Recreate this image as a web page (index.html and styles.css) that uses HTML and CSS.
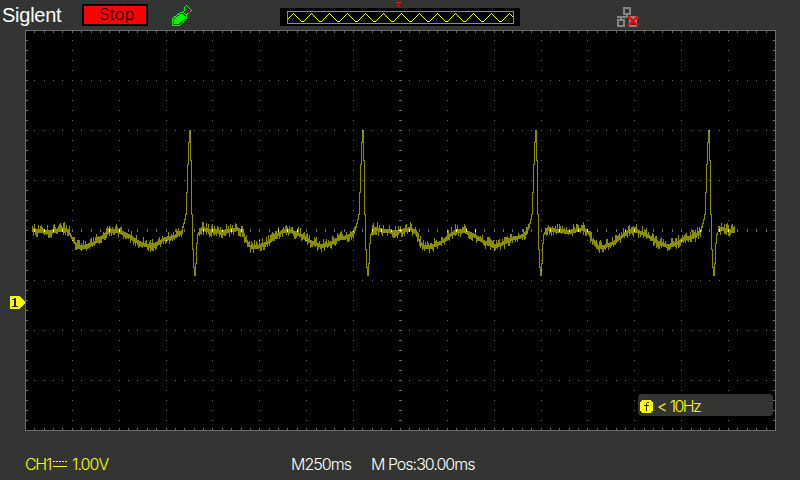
FILE: index.html
```html
<!DOCTYPE html>
<html lang="en">
<head>
<meta charset="utf-8">
<title>Siglent</title>
<link rel="stylesheet" href="styles.css">
</head>
<body>
<div class="screen">
  <header class="topbar">
    <div class="brand">Siglent</div>
    <div class="status">Stop</div>
    <svg class="usb" width="20" height="21" viewBox="0 0 20 21" shape-rendering="crispEdges" fill="none" stroke="#00f800">
      <path d="M.5 20.5V13.5L8.5 7.5H11.5L14.5 10.5V13.5L7.5 20.5Z"/>
      <path d="M2.5 18.5V14.5L8.5 9.5H10.5L12.5 11.5V13L6.5 18.5Z" fill="#00f800"/>
      <path d="M11.5 7.5L12.5 4.5V2.5L14.5.5L19.5 5.5L17.5 7.5L14.5 9.5"/>
    </svg>
    <div class="memory">
      <svg width="240" height="18" viewBox="0 0 240 18" shape-rendering="crispEdges" fill="none">
        <rect x="7.5" y="3.5" width="226" height="12" stroke="#8c8c8c"/>
        <path id="zigzag" fill="#ffff00"/>
      </svg>
      <svg class="trigger" width="5" height="5" viewBox="0 0 5 5" shape-rendering="crispEdges"><path d="M0 0H5V1H3V5H2V1H0Z" fill="#ff0000"/></svg>
    </div>
    <svg class="lan" width="23" height="21" viewBox="0 0 23 21" shape-rendering="crispEdges" fill="none">
      <path d="M7 1H13V7H7ZM1 13H7V19H1ZM13 13H19V19H13ZM10 7V10M0 10H20M4 10V13M16 10V13" stroke="#858585" stroke-width="2"/>
      <path d="M11 9.5L21 18.5M21 9.5L11 18.5" stroke="#ff0000" stroke-width="2.4"/>
    </svg>
  </header>
  <main class="display">
    <div class="gutter">
      <svg width="16" height="13" viewBox="0 0 16 13" shape-rendering="crispEdges"><path d="M0 0H10L15.5 6.5L10 13H0Z" fill="#ffff00"/><path d="M2 3H4V2H6V10H8V11H2V10H4V4H2Z" fill="#222"/></svg>
    </div>
    <div class="scope">
      <svg width="751" height="401" viewBox="25 30 751 401" shape-rendering="crispEdges">
        <rect x="25" y="30" width="751" height="401" fill="#000"/>
        <path id="grid" fill="#6c6c6c"/>
        <rect x="25.5" y="30.5" width="750" height="400" fill="none" stroke="#6c6c6c"/>
        <path id="trace" fill="#8c8c00"/>
        <path id="glow" fill="#ffff54"/>
      </svg>
      <div class="freq">
        <svg width="13" height="13" viewBox="0 0 13 13" shape-rendering="crispEdges"><path d="M2 0H11V1H12V2H13V11H12V12H11V13H2V12H1V11H0V2H1V1H2Z" fill="#ffff00"/><path d="M7 2H9V3H7V5H9V6H7V11H6V6H4V5H6V3H7Z" fill="#222"/></svg>
        <span class="freq-value">&lt; 10Hz</span>
      </div>
    </div>
  </main>
  <footer class="bottombar">
    <span class="channel">CH1</span>
    <svg class="coupling" width="14" height="7" viewBox="0 0 14 7" shape-rendering="crispEdges" fill="#ffff00"><path d="M0 0h2v1h-2zM3 0h2v1h-2zM6 0h2v1h-2zM9 0h2v1h-2zM12 0h2v1h-2zM0 5h14v1h-14z"/></svg>
    <span class="scale">1.00V</span>
    <span class="timebase">M250ms</span>
    <span class="position">M Pos:30.00ms</span>
  </footer>
</div>
<script src="scope.js"></script>
</body>
</html>
```
FILE: styles.css
```css
* { box-sizing: border-box; }
body { margin: 0; background: #333533; }
svg { display: block; }
.screen {
  width: 800px;
  height: 480px;
  overflow: hidden;
  display: flex;
  flex-direction: column;
  background: #333533;
  color: #fff;
  font-family: Inter, "Liberation Sans", sans-serif;
  font-weight: 300;
  font-size: 16px;
}
.topbar { height: 30px; display: flex; align-items: flex-start; }
.brand {
  width: 82px;
  padding: 4px 0 0 2px;
  font: 20px/22px "Liberation Sans", sans-serif;
  letter-spacing: -0.25px;
}
.status {
  width: 66px;
  height: 22px;
  margin-top: 4px;
  border: 2px solid #000;
  background: #ff0000;
  color: #000;
  text-align: center;
  line-height: 17px;
  padding-left: 4px;
  letter-spacing: 0.4px;
}
.usb { margin: 5px 0 0 24px; }
.memory { position: relative; width: 240px; height: 18px; margin: 8px 0 0 88px; background: #000; }
.trigger { position: absolute; left: 116px; top: -6px; }
.lan { margin: 7px 0 0 97px; }
.display { display: flex; height: 401px; }
.gutter { width: 25px; padding: 266px 0 0 10px; }
.scope { position: relative; width: 751px; height: 401px; }
.freq {
  position: absolute;
  left: 613px;
  top: 364px;
  width: 135px;
  height: 22px;
  padding: 2px 0 0 2px;
  display: flex;
  align-items: center;
  border-radius: 4px;
  background: #333533;
  color: #ffff00;
}
.freq-value { margin-left: 4px; line-height: 20px; letter-spacing: -1.6px; word-spacing: 1px; }
.bottombar {
  height: 49px;
  padding: 22px 0 0 25px;
  display: flex;
  line-height: 22px;
  white-space: nowrap;
}
.channel { width: 28px; color: #ffff00; letter-spacing: -1.3px; }
.coupling { margin-top: 8px; }
.scale { width: 219px; margin-left: 5px; color: #ffff00; letter-spacing: -0.9px; }
.timebase { width: 80px; letter-spacing: -0.95px; }
.position { letter-spacing: -1px; }
```
FILE: scope.js
```js
const box = (x, y, w, h) => `M${x} ${y}h${w}v${h}h${-w}z`;

// Graticule: 16 x 8 divisions, five subdivisions each.
const marks = [];
for (let i = 1; i < 80; i++) {
  const x = Math.ceil(25 + i * 9.375 - 0.5);
  marks.push([x, 31, 1, 2], [x, 428, 1, 2], [x, 229, 1, 3]);
  for (let y = 80; y < 430; y += 50) marks.push([x, y, 1, 1]);
}
for (let y = 40; y < 430; y += 10) {
  marks.push([26, y, 2, 1], [773, y, 2, 1], [399, y, 3, 1]);
  for (let i = 1; i < 16; i++) marks.push([Math.ceil(25 + i * 46.875 - 0.5), y, 1, 1]);
}
document.getElementById('grid').setAttribute('d', marks.map(m => box(...m)).join(''));

// One heartbeat, offsets in pixels from the R peak.
const beat = [
  [-158, 229], [-140, 231], [-125, 228], [-121, 230], [-117, 238], [-112, 246], [-105, 246],
  [-95, 242], [-86, 235], [-80, 230], [-72, 230], [-62, 234], [-50, 242], [-41, 245],
  [-33, 243], [-25, 238], [-15, 236], [-8, 231], [-5, 219], [-4, 214], [-3, 192], [-2, 164],
  [-1, 142], [0, 130], [1, 160], [2, 214], [3, 249], [4, 267], [5, 275], [6, 263],
  [7, 243], [8, 234], [10, 229], [15, 227.5]
];
const peaks = [189, 362, 535, 708];
const level = d => {
  for (let i = 1; i < beat.length; i++) {
    const [x0, y0] = beat[i - 1], [x1, y1] = beat[i];
    if (d >= x0 && d <= x1) return y0 + (y1 - y0) * (d - x0) / (x1 - x0);
  }
  return 229;
};
let seed = 17;
const random = () => (seed = (seed * 16807) % 2147483647) / 2147483647;
const cols = [];
let last = 228;
for (let x = 32; x <= 734; x++) {
  const peak = peaks.find(p => x <= p + 15) || 882;
  const d = x - peak;
  const quiet = d > -7 && d < 10;
  const y = Math.round(level(d));
  let top = Math.min(last, y), bottom = Math.max(last, y);
  if (!quiet) {
    // Sampling noise: a solid core with taller strokes reaching up or down.
    const kind = random();
    top = y - 1 - (kind < 0.45 ? 2 + Math.floor(random() * 4) : 0);
    bottom = y + 1 + (kind > 0.35 && kind < 0.85 ? 2 + Math.floor(random() * 4) : 1);
  }
  cols.push([x, top, 1, bottom - top + 1]);
  last = y;
}
document.getElementById('trace').setAttribute('d', cols.map(c => box(...c)).join(''));

// Brighter pixels where the trace crosses a graticule mark.
const glow = [];
for (const [x, y, w, h] of marks)
  for (let i = x; i < x + w; i++)
    for (let j = y; j < y + h; j++) {
      const c = cols[i - 32];
      if (c && j >= c[1] && j < c[1] + c[3]) glow.push(box(i, j, 1, 1));
    }
document.getElementById('glow').setAttribute('d', glow.join(''));

// Memory preview: triangle wave with an 18px period, one pixel per column.
let zig = '';
for (let x = 8; x < 233; x++) {
  const phase = Math.abs(((x - 13 + 180) % 18) - 9);
  zig += box(x, 5 + Math.min(8, 9 - phase), 1, 1);
}
document.getElementById('zigzag').setAttribute('d', zig);
```
